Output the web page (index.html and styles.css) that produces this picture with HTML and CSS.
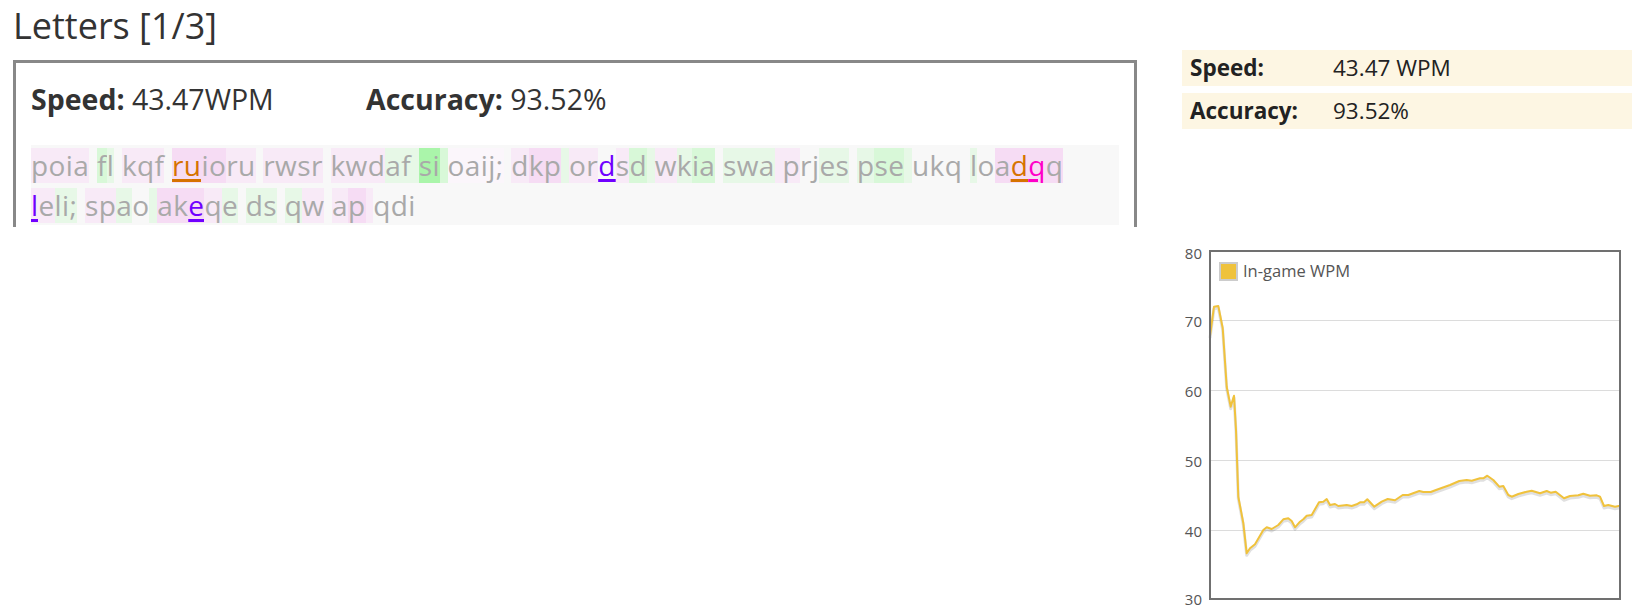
FILE: index.html
```html
<!DOCTYPE html>
<html>
<head>
<meta charset="utf-8">
<link rel="stylesheet" href="styles.css">
</head>
<body>
<div class="page">
  <div class="left">
    <h1 class="title">Letters [1/3]</h1>
    <div class="clip">
      <div class="box">
        <div class="stats">
          <span class="stat"><b>Speed:</b> 43.47WPM</span><span class="stat"><b>Accuracy:</b> 93.52%</span>
        </div>
        <div class="typed"><span class="p1">poia</span><span> </span><span class="g2">f</span><span class="g1">l</span><span> </span><span class="p1">kqf</span><span> </span><span class="p2 eo">ru</span><span class="p2">io</span><span class="p1">ru</span><span> </span><span class="p1">rwsr</span><span> </span><span class="p1">kwd</span><span class="g1">af </span><span class="g3">si</span><span class="g2"> </span><span class="p0">oaij;</span><span> </span><span class="p1">d</span><span class="p2">kp</span><span class="g1"> </span><span class="p1">or</span><span class="ep">d</span><span class="p1">s</span><span class="g2">d</span><span class="g1"> </span><span class="p1">w</span><span class="g1">k</span><span class="g2">ia</span><span> </span><span class="g1">swa</span><span class="p1"> p</span><span>rj</span><span class="g1">es</span><span> </span><span class="g1">p</span><span class="g2">se</span><span class="g1"> </span><span>ukq</span><span> </span><span class="g1">l</span><span>o</span><span class="p2">a</span><span class="p2 eo">d</span><span class="p2 em">q</span><span class="p2">q</span><span> </span><span class="p1 ep">l</span><span class="p1">e</span><span class="g1">li;</span><span> </span><span class="p1">sp</span><span class="g1">a</span><span>o</span><span class="g1"> </span><span class="p2">ak</span><span class="p2 ep">e</span><span class="p1">q</span><span class="g1">e</span><span> </span><span class="g1">ds</span><span> </span><span class="g1">q</span><span class="p1">w</span><span> </span><span class="p1">a</span><span class="p2">p</span><span class="p1"> </span><span>qdi</span></div>
      </div>
    </div>
  </div>
  <div class="right">
    <div class="summary">
      <div class="row"><span class="key">Speed:</span><span class="val">43.47 WPM</span></div>
      <div class="row"><span class="key">Accuracy:</span><span class="val">93.52%</span></div>
    </div>
    <svg class="chart" width="450" height="376" viewBox="1182 240 450 376">
      <g class="grid">
        <line x1="1209" y1="320.5" x2="1620" y2="320.5"/>
        <line x1="1209" y1="390.5" x2="1620" y2="390.5"/>
        <line x1="1209" y1="460.5" x2="1620" y2="460.5"/>
        <line x1="1209" y1="530.5" x2="1620" y2="530.5"/>
      </g>
      <g class="axis">
        <text x="1202" y="259">80</text>
        <text x="1202" y="327">70</text>
        <text x="1202" y="397">60</text>
        <text x="1202" y="467">50</text>
        <text x="1202" y="537">40</text>
        <text x="1202" y="605">30</text>
      </g>
      <polyline class="shadow" transform="translate(0,2)" points="1210,336 1214,306.7 1218.3,306 1222.7,328 1226.7,386.7 1230.7,406.7 1234,395.7 1236,430 1238.3,496.7 1243.3,523 1246.7,553.3 1250,548.3 1255,544.3 1263.3,530 1266.7,527.3 1271.7,529 1278.3,525 1283.3,519.3 1288.3,518.3 1291.7,521 1295,527.3 1300,521.7 1303.3,519.3 1306.7,515.7 1311.7,515 1319,502.3 1323.3,501.7 1326.7,499 1330,505 1335,504 1338.3,506 1346.7,505 1351.7,506 1356.7,504.3 1360,502.3 1364,502.3 1367.3,499.3 1374.3,506.7 1381.7,501.7 1387.7,499 1395,500.3 1402.7,495 1408.3,495 1419.3,491 1423.3,492 1430.7,492 1436,490 1450,485 1459.3,481 1466.7,480 1471.7,480.7 1480,478.3 1483.3,478.3 1487.3,475.7 1493.3,480 1499.3,486.7 1503.3,486 1508.3,495 1511.7,496.7 1518.3,494 1526.7,491.7 1531.7,490.7 1540,493.3 1546.7,491 1550.7,492.7 1555.7,491.7 1564,498.3 1570,496 1578.3,495.3 1583.3,493.7 1590,495.7 1596.7,495.3 1600,496.7 1604,506 1608.3,505 1615,506.7 1620,505.7"/>
      <polyline class="line" points="1210,336 1214,306.7 1218.3,306 1222.7,328 1226.7,386.7 1230.7,406.7 1234,395.7 1236,430 1238.3,496.7 1243.3,523 1246.7,553.3 1250,548.3 1255,544.3 1263.3,530 1266.7,527.3 1271.7,529 1278.3,525 1283.3,519.3 1288.3,518.3 1291.7,521 1295,527.3 1300,521.7 1303.3,519.3 1306.7,515.7 1311.7,515 1319,502.3 1323.3,501.7 1326.7,499 1330,505 1335,504 1338.3,506 1346.7,505 1351.7,506 1356.7,504.3 1360,502.3 1364,502.3 1367.3,499.3 1374.3,506.7 1381.7,501.7 1387.7,499 1395,500.3 1402.7,495 1408.3,495 1419.3,491 1423.3,492 1430.7,492 1436,490 1450,485 1459.3,481 1466.7,480 1471.7,480.7 1480,478.3 1483.3,478.3 1487.3,475.7 1493.3,480 1499.3,486.7 1503.3,486 1508.3,495 1511.7,496.7 1518.3,494 1526.7,491.7 1531.7,490.7 1540,493.3 1546.7,491 1550.7,492.7 1555.7,491.7 1564,498.3 1570,496 1578.3,495.3 1583.3,493.7 1590,495.7 1596.7,495.3 1600,496.7 1604,506 1608.3,505 1615,506.7 1620,505.7"/>
      <rect class="frame" x="1210" y="251" width="410" height="348"/>
      <rect class="swatch" x="1220" y="263" width="17" height="17"/>
      <text class="legend" x="1243" y="277">In-game WPM</text>
    </svg>
  </div>
</div>
</body>
</html>
```

FILE: styles.css
```css
html, body {
  margin: 0;
  padding: 0;
  background: #fff;
}
body {
  font-family: "Open Sans", "Noto Sans", sans-serif;
  color: #333;
}
.page {
  display: flex;
  align-items: flex-start;
  padding-left: 13px;
  width: 1632px;
  box-sizing: border-box;
  overflow: hidden;
}
.left {
  width: 1124px;
  flex: none;
}
.title {
  margin: 2px 0 10px 0;
  font-size: 36px;
  line-height: 48px;
  font-weight: 400;
  color: #333;
}
.clip {
  height: 167px;
  overflow: hidden;
}
.box {
  border: 3px solid #888;
  padding: 16px 15px;
}
.stats {
  font-size: 28.5px;
  line-height: 40px;
  color: #333;
  white-space: nowrap;
}
.stat {
  display: inline-block;
  width: 335px;
}
.stat b {
  font-weight: 700;
}
.typed {
  margin-top: 26px;
  padding-right: 30px;
  background: #f8f8f8;
  font-size: 28px;
  letter-spacing: 0.4px;
  line-height: 40px;
  color: #a9a9a9;
}
.typed span {
  background-repeat: no-repeat;
  background-position: 0 55%;
  background-size: 100% 35px;
}
.p0 { background-image: linear-gradient(#fbf6fb, #fbf6fb); }
.p1 { background-image: linear-gradient(#f8eaf7, #f8eaf7); }
.p2 { background-image: linear-gradient(#f6dcf4, #f6dcf4); }
.g1 { background-image: linear-gradient(#e7f8e7, #e7f8e7); }
.g2 { background-image: linear-gradient(#d8f8d8, #d8f8d8); }
.g3 { background-image: linear-gradient(#aaf5aa, #aaf5aa); }
.eo, .ep, .em {
  text-decoration: underline;
  text-decoration-thickness: 3px;
  text-underline-offset: 3px;
}
.eo { color: #d67300; }
.ep { color: #7000ff; }
.em { color: #ff00c8; }
.right {
  margin-left: 45px;
  width: 450px;
  flex: none;
}
.summary {
  margin-top: 50px;
  display: flex;
  flex-direction: column;
  gap: 7px;
}
.row {
  background: #fdf6e3;
  height: 36px;
  line-height: 36px;
  font-size: 22.5px;
  padding-left: 8px;
  white-space: nowrap;
  color: #222;
}
.key {
  display: inline-block;
  width: 143px;
  font-weight: 700;
}
.chart {
  display: block;
  margin-top: 111px;
}
.grid line {
  stroke: #dcdcdc;
  stroke-width: 1;
}
.axis text {
  font-family: "Open Sans", sans-serif;
  font-size: 15px;
  fill: #555;
  text-anchor: end;
}
.frame {
  fill: none;
  stroke: #707070;
  stroke-width: 2;
}
.line {
  fill: none;
  stroke: #f0c23c;
  stroke-width: 2;
  stroke-linejoin: round;
}
.shadow {
  fill: none;
  stroke: rgba(0,0,0,0.12);
  stroke-width: 3;
  stroke-linejoin: round;
}
.swatch {
  fill: #efc23c;
  stroke: #cccccc;
  stroke-width: 2;
}
.legend {
  font-family: "Open Sans", sans-serif;
  font-size: 16.5px;
  fill: #555;
}
```
